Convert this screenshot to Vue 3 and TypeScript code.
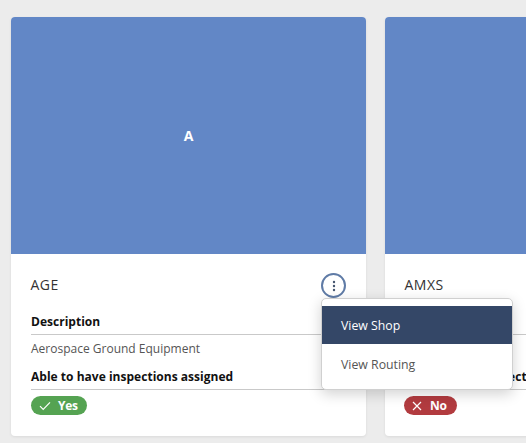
<script setup lang="ts">
interface Shop {
  code: string
  letter: string
  description: string
  inspectable: boolean
  menuOpen: boolean
}
const shops: Shop[] = [
  { code: 'AGE', letter: 'A', description: 'Aerospace Ground Equipment', inspectable: true, menuOpen: true },
  { code: 'AMXS', letter: 'A', description: 'Maintenance', inspectable: false, menuOpen: false },
]
</script>

<template>
  <div class="page">
    <article v-for="shop in shops" :key="shop.code" class="card" :class="{ raised: shop.menuOpen }">
      <div class="banner">{{ shop.letter }}</div>
      <div class="body">
        <div class="head">
          <h2 class="code">{{ shop.code }}</h2>
          <button class="more" aria-label="More">
            <svg width="4" height="12" viewBox="0 0 4 12" fill="#44546f">
              <circle cx="2" cy="2" r="1.2" />
              <circle cx="2" cy="6" r="1.2" />
              <circle cx="2" cy="10" r="1.2" />
            </svg>
          </button>
        </div>
        <div class="label">Description</div>
        <div class="value">{{ shop.description }}</div>
        <div class="label">Able to have inspections assigned</div>
        <div class="badge-row">
          <span class="badge" :class="shop.inspectable ? 'yes' : 'no'">
            <svg v-if="shop.inspectable" width="12" height="10" viewBox="0 0 12 10" fill="none" stroke="#fff" stroke-width="1.2">
              <path d="M1 5.2 4.2 8.4 11 1.4" />
            </svg>
            <svg v-else width="10" height="10" viewBox="0 0 10 10" fill="none" stroke="#fff" stroke-width="1.2">
              <path d="M1 1 9 9M9 1 1 9" />
            </svg>
            <span class="badge-text">{{ shop.inspectable ? 'Yes' : 'No' }}</span>
          </span>
        </div>
        <div v-if="shop.menuOpen" class="menu">
          <div class="item active">View Shop</div>
          <div class="item">View Routing</div>
        </div>
      </div>
    </article>
  </div>
</template>

<style scoped>
.page {
  display: flex;
  gap: 19px;
  width: 526px;
  height: 443px;
  padding: 17px 0 0 11px;
  box-sizing: border-box;
  overflow: hidden;
  background: #ececec;
  font-family: "Open Sans", "Noto Sans", sans-serif;
}
.card {
  flex: 0 0 355px;
  height: 419px;
  background: #fff;
  border-radius: 4px;
  box-shadow: 0 1px 3px rgba(0, 0, 0, 0.08);
  overflow: visible;
}
.raised {
  position: relative;
  z-index: 2;
}
.banner {
  height: 237px;
  display: flex;
  align-items: center;
  justify-content: center;
  background: #6287c6;
  border-radius: 4px 4px 0 0;
  color: #fff;
  font-size: 14px;
  font-weight: 700;
  padding-bottom: 1px;
  box-sizing: border-box;
}
.body {
  padding: 19px 20px 0;
}
.head {
  display: flex;
  align-items: center;
  justify-content: space-between;
  height: 25px;
  margin-bottom: 14px;
}
.code {
  margin: 0 0 2px -0.5px;
  font-size: 14px;
  font-weight: 400;
  letter-spacing: 0.5px;
  color: #333;
}
.more {
  width: 25px;
  height: 25px;
  padding: 0;
  display: flex;
  align-items: center;
  justify-content: center;
  background: #fff;
  border: 2px solid #5f7ba6;
  border-radius: 50%;
}
.label {
  height: 23px;
  line-height: 20px;
  box-sizing: border-box;
  font-size: 12px;
  font-weight: 700;
  letter-spacing: 0.02px;
  color: #111;
  border-bottom: 1px solid #c9c9c9;
}
.value {
  height: 32px;
  line-height: 27px;
  font-size: 12px;
  color: #555;
}
.badge-row {
  padding-top: 6px;
  display: flex;
}
.badge {
  height: 19px;
  display: inline-flex;
  align-items: center;
  gap: 7px;
  padding: 0 9px 0 8px;
  border-radius: 10px;
  color: #fff;
  font-size: 12px;
  font-weight: 700;
}
.badge-text {
  letter-spacing: -0.3px;
}
.yes {
  background: #55a352;
}
.no {
  margin-left: -1px;
  gap: 8px;
  padding-right: 10px;
  background: #b23b3f;
}
.menu {
  position: absolute;
  left: 310px;
  top: 281px;
  width: 192px;
  height: 92px;
  box-sizing: border-box;
  padding: 7px 0;
  background: #fff;
  border: 1px solid #d0d0d0;
  border-radius: 5px;
  box-shadow: 0 4px 14px rgba(0, 0, 0, 0.18);
}
.item {
  height: 38px;
  line-height: 39px;
  padding: 0 19px;
  font-size: 12.3px;
  color: #555;
}
.item + .item {
  line-height: 41px;
}
.active {
  background: #344767;
  color: #fff;
}
</style>

<style>
html,
body {
  margin: 0;
  overflow: hidden;
}
</style>
